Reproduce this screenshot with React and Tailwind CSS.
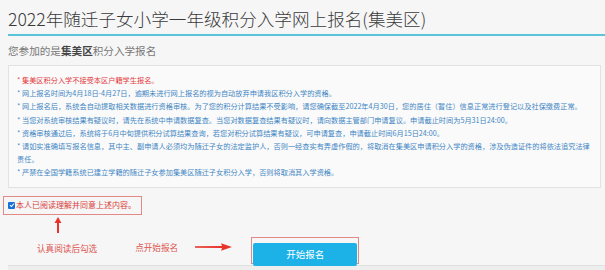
import React from 'react';

const notices = [
  '* 网上报名时间为4月18日-4月27日，逾期未进行网上报名的视为自动放弃申请我区积分入学的资格。',
  '* 网上报名后，系统会自动提取相关数据进行资格审核。为了您的积分计算结果不受影响，请您确保截至2022年4月30日，您的居住（暂住）信息正常进行登记以及社保缴费正常。',
  '* 当您对系统审核结果有疑议时，请先在系统中申请数据复查。当您对数据复查结果有疑议时，请向数据主管部门申请复议。申请截止时间为5月31日24:00。',
  '* 资格审核通过后，系统将于6月中旬提供积分试算结果查询，若您对积分试算结果有疑议，可申请复查，申请截止时间6月15日24:00。',
  '* 请如实准确填写报名信息，其中主、副申请人必须均为随迁子女的法定监护人，否则一经查实有弄虚作假的，将取消在集美区申请积分入学的资格，涉及伪造证件的将依法追究法律责任。',
  '* 严禁在全国学籍系统已建立学籍的随迁子女参加集美区随迁子女积分入学，否则将取消其入学资格。',
];

const App = () => {
  return (
    <div className="w-[605px] h-[270px] overflow-hidden bg-[#f6f6f6] font-['Microsoft_YaHei','Noto_Sans_CJK_SC',sans-serif]">
      <div className="px-2 pt-[7px]">
        <h1 className="text-[17.6px] leading-[24px] font-light text-[#3a3a3a] whitespace-nowrap">
          2022年随迁子女小学一年级积分入学网上报名(集美区)
        </h1>
        <div className="mt-[3px] h-[2px] bg-[#5bc3da] -mr-2" />
        <p className="mt-[8px] text-[10.6px] leading-[14px] text-[#777]">
          您参加的是<b className="text-[#444]">集美区</b>积分入学报名
        </p>

        {/* notice box */}
        <div className="mt-[7px] w-[593px] border border-[#e2e2e2] bg-[#fafafa] pl-2 pr-2 pt-2 pb-[7px] text-[7.2px] leading-[13.2px]">
          <p className="text-[#e4393c]">* 集美区积分入学不接受本区户籍学生报名。</p>
          {notices.map((t, i) => (
            <p key={i} className="text-[#3f86c4]">{t}</p>
          ))}
        </div>
      </div>

      {/* agree */}
      <div className="mt-[8px] ml-[3px] w-[139px] h-[19px] border border-[#e28b86] flex items-center pl-[4px] gap-[1px]">
        <span className="w-[7px] h-[7px] rounded-[1px] bg-[#1b6fd8] flex items-center justify-center">
          <svg viewBox="0 0 8 8" className="w-[6px] h-[6px]">
            <path d="M1.3 4.2 L3.2 6 L6.8 2" fill="none" stroke="#fff" strokeWidth="1.4" />
          </svg>
        </span>
        <span className="text-[8px] leading-[10px] text-[#d9403a] whitespace-nowrap">本人已阅读理解并同意上述内容。</span>
      </div>

      {/* hints + button */}
      <div className="mt-[2px] flex items-start">
        <div className="ml-[37px] flex flex-col">
          <svg viewBox="0 0 8 16" className="ml-[17px] w-[8px] h-[16px]">
            <path d="M4 0 L7.5 6 L5 6 L5 16 L3 16 L3 6 L0.5 6 Z" fill="#e8342b" />
          </svg>
          <span className="mt-[9px] text-[8.6px] leading-[12px] text-[#dd5550] whitespace-nowrap">认真阅读后勾选</span>
        </div>
        <span className="ml-[38px] mt-[24px] text-[8.6px] leading-[12px] text-[#dd5550] whitespace-nowrap">点开始报名</span>
        <svg viewBox="0 0 37 8" className="ml-[17px] mt-[26px] w-[37px] h-[8px]">
          <path d="M0 3.3 L27 3 L26 0.3 L37 4 L26 7.7 L27 5 L0 4.7 Z" fill="#e8342b" />
        </svg>
        <div className="ml-[19px] mt-[20px] w-[108px] h-[27px] border border-[#e08a85] p-[1px]">
          <button className="w-full h-full bg-[#1cb2e8] rounded-[2px] text-white text-[9.5px] font-normal leading-none">
            开始报名
          </button>
        </div>
      </div>

      <div className="mt-[1px] ml-2 h-[10px] bg-[#eeeeee] border-t border-[#e0e0e0]" />
    </div>
  );
};

export default App;
